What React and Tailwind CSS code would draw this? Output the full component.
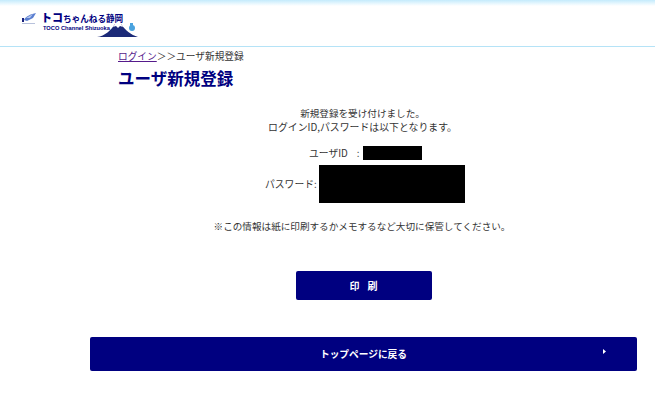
const jp = { fontFamily: '"Noto Sans CJK JP", "Liberation Sans", sans-serif' };

function Logo() {
  return (
    <div className="flex items-start">
      {/* left mark */}
      <svg width="15" height="12" viewBox="0 0 15 12" className="mt-[2px] mr-[5px]">
        <path d="M3 7 C5 3 10 1 15 0 L12 5 L6 8 Z" fill="#5b7fd0" />
        <path d="M5 5 L12 1 L9 5 Z" fill="#b4c6ee" />
        <rect x="1" y="5" width="2" height="4" fill="#1a237e" />
        <rect x="1" y="10" width="13" height="1" fill="#b8c2dc" />
      </svg>
      <div className="relative w-[96px] h-[28px]">
        <svg width="42" height="20" viewBox="0 0 42 20" className="absolute left-[56px] top-[7px]">
          <path d="M0 19 C8 18 14 12 18 6 L24 6 C28 12 34 17 41 19 Z" fill="#1c2a78" />
          <path d="M18 6 L24 6 L26 9 L23 8 L21 10 L19 8 L16 9 Z" fill="#ffffff" />
          <circle cx="35" cy="10" r="3" fill="#4aa3df" />
          <rect x="33" y="5" width="3" height="3" fill="#4aa3df" />
        </svg>
        <div className="relative text-[8.6px] leading-[12px] font-bold text-[#000080] whitespace-nowrap">
          <span className="text-[11px] font-black">トコ</span>ちゃんねる静岡
        </div>
        <div className="relative text-[5.7px] leading-[6px] font-bold text-[#000080] whitespace-nowrap mt-[1px] ml-[2px]" style={{ fontFamily: '"Liberation Sans", sans-serif' }}>TOCO Channel Shizuoka</div>
      </div>
    </div>
  );
}

export default function App() {
  return (
    <div className="w-[655px] h-[410px] bg-white overflow-hidden text-[#333333]" style={jp}>
      <header className="h-[47px] border-b border-[#b5e3f7] bg-gradient-to-b from-[#c4ebfc] to-white bg-[length:100%_6px] bg-no-repeat pt-[11px] pl-[21px]">
        <Logo />
      </header>

      <main className="pl-[90px] w-[637px]">
        <div className="pl-[28px]">
          <p className="mt-[1px] text-[9.7px] leading-[16px]">
            <a href="#" className="text-[#551a8b] underline">ログイン</a>＞＞ユーザ新規登録
          </p>
          <h1 className="mt-[2px] text-[16.5px] leading-[24px] font-bold text-[#000080]">ユーザ新規登録</h1>
        </div>

        <div className="mt-[16px] pr-[2px] text-center text-[9.6px] leading-[14px]">
          <p>新規登録を受け付けました。</p>
          <p className="text-[9.9px]">ログインID,パスワードは以下となります。</p>
        </div>

        <div className="mt-[12px] flex items-center pl-[219px] h-[14px] text-[9.8px]">
          <span>ユーザID</span>
          <span className="ml-[9px] mr-[3px]">:</span>
          <span className="w-[59px] h-[14px] bg-black" />
        </div>
        <div className="mt-[5px] flex items-center pl-[175px] text-[9.8px]">
          <span className="mr-[2px]">パスワード:</span>
          <span className="w-[146px] h-[38px] bg-black" />
        </div>

        <p className="mt-[16px] pr-[3px] text-center text-[9.6px] leading-[14px]">※この情報は紙に印刷するかメモするなど大切に保管してください。</p>

        <div className="mt-[38px] flex justify-center">
          <button className="w-[136px] h-[29px] rounded-[2px] bg-[#000080] text-white text-[10px] font-bold tracking-[8px] pl-[8px]">印刷</button>
        </div>

        <button className="relative mt-[37px] w-[547px] h-[34px] rounded-[2px] bg-[#000080] text-white text-[9.7px] font-bold">
          トップページに戻る
          <svg width="3" height="5" viewBox="0 0 3 5" className="absolute right-[31px] top-[12px]">
            <path d="M0 0 L3 2.5 L0 5 Z" fill="#ffffff" />
          </svg>
        </button>
      </main>
    </div>
  );
}
